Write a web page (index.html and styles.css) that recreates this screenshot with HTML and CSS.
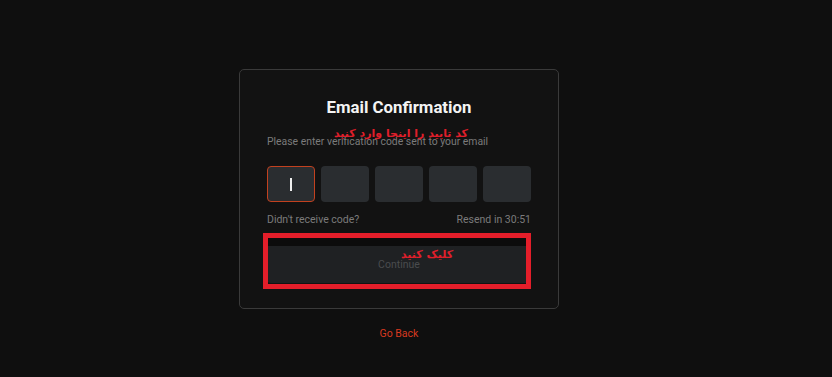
FILE: index.html
```html
<!DOCTYPE html>
<html lang="en">
<head>
<meta charset="utf-8">
<title>Email Confirmation</title>
<link rel="stylesheet" href="styles.css">
</head>
<body>
<main class="page">
  <section class="card">
    <h1 class="title">Email Confirmation</h1>
    <p class="subtitle">Please enter verification code sent to your email</p>
    <div class="codes">
      <div class="code active"><span class="caret"></span></div>
      <div class="code"></div>
      <div class="code"></div>
      <div class="code"></div>
      <div class="code"></div>
    </div>
    <div class="meta">
      <span>Didn't receive code?</span>
      <span>Resend in 30:51</span>
    </div>
    <button class="continue" type="button">Continue</button>
    <div class="note note-code" dir="rtl">کد تایید را اینجا وارد کنید</div>
    <div class="mark"></div>
    <div class="note note-click" dir="rtl">کلیک کنید</div>
  </section>
  <a class="back" href="#">Go Back</a>
</main>
</body>
</html>
```
FILE: styles.css
```css
* { box-sizing: border-box; }
html, body { margin: 0; height: 100%; }
body {
  background: #0f0f0f;
  font-family: Roboto, "Liberation Sans", sans-serif;
  color: #fff;
}
.page {
  display: flex;
  flex-direction: column;
  align-items: center;
  padding: 69px 34px 0 0;
}
.card {
  position: relative;
  width: 320px;
  height: 240px;
  border: 1px solid #3a3a3a;
  border-radius: 5px;
  background: #121212;
  padding: 27px 27px 0;
  display: flex;
  flex-direction: column;
}
.title {
  margin: 0;
  font-size: 16.8px;
  font-weight: 700;
  line-height: 20px;
  text-align: center;
  color: #f4f4f4;
}
.subtitle {
  margin: 18px 0 0;
  font-size: 10.4px;
  line-height: 14px;
  color: #7b7b7b;
}
.codes {
  margin-top: 17px;
  display: flex;
  gap: 6px;
}
.code {
  width: 48px;
  height: 36px;
  border-radius: 4px;
  background: #2a2d30;
  display: flex;
  align-items: center;
  justify-content: center;
}
.code.active {
  border: 1px solid #c2411f;
}
.caret {
  width: 1.5px;
  height: 13px;
  background: #eee;
}
.meta {
  margin-top: 11px;
  display: flex;
  justify-content: space-between;
  font-size: 10.5px;
  line-height: 14px;
  color: #7b7b7b;
}
.continue {
  margin-top: 18px;
  height: 38px;
  border: 0;
  border-radius: 4px;
  background: #1f2123;
  color: #4a4c4e;
  font-family: inherit;
  font-size: 10.5px;
  padding: 0;
}
.note {
  position: absolute;
  font-family: "DejaVu Sans", sans-serif;
  font-weight: 700;
  color: #e01f2b;
  font-size: 11px;
  line-height: 16px;
  white-space: nowrap;
  z-index: 2;
}
.note-code { left: 94px; top: 56px; }
.note-click { left: 161px; top: 177px; }
.mark {
  position: absolute;
  left: 23px;
  top: 163px;
  width: 268px;
  height: 56px;
  border: 5px solid #e41e2a;
  background: linear-gradient(#0c0c0c 0 8px, transparent 8px);
  background-clip: padding-box;
  z-index: 1;
}
.back {
  margin-top: 18px;
  font-size: 10.5px;
  line-height: 14px;
  color: #d8391f;
  text-decoration: none;
}
```
